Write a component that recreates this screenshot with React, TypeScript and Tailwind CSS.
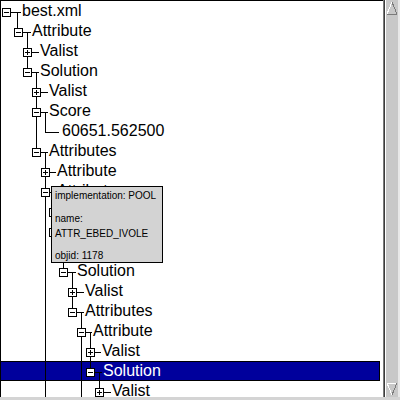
import React from "react";

type Row = {
  label: string;
  kind: "plus" | "minus" | "leaf";
  bx?: number;
  tx: number;
  lx?: number;
};

const rows: Row[] = [
  { label: "best.xml", bx: 1, tx: 22, kind: "minus" },
  { label: "Attribute", bx: 13, tx: 32, kind: "minus" },
  { label: "Valist", bx: 22, tx: 40, kind: "plus" },
  { label: "Solution", bx: 22, tx: 40, kind: "minus" },
  { label: "Valist", bx: 31, tx: 49, kind: "plus" },
  { label: "Score", bx: 31, tx: 49, kind: "minus" },
  { label: "60651.562500", tx: 62, kind: "leaf", lx: 44 },
  { label: "Attributes", bx: 31, tx: 49, kind: "minus" },
  { label: "Attribute", bx: 40, tx: 57, kind: "plus" },
  { label: "Attribute", bx: 40, tx: 57, kind: "minus" },
  { label: "Valist", bx: 48, tx: 66, kind: "plus" },
  { label: "Solution", bx: 48, tx: 66, kind: "minus" },
  { label: "Valist", bx: 58, tx: 76, kind: "plus" },
  { label: "Solution", bx: 58, tx: 77, kind: "minus" },
  { label: "Valist", bx: 67, tx: 85, kind: "plus" },
  { label: "Attributes", bx: 67, tx: 85, kind: "minus" },
  { label: "Attribute", bx: 76, tx: 93, kind: "minus" },
  { label: "Valist", bx: 85, tx: 102, kind: "plus" },
  { label: "Solution", bx: 85, tx: 103, kind: "minus" },
  { label: "Valist", bx: 94, tx: 112, kind: "plus" },
];

const SELECTED = 18;
const cy = (i: number) => 11 + 20 * i;

const verticals: [number, number, number][] = [
  [16, cy(0), cy(1) - 4],
  [26, cy(1), cy(3) - 4],
  [35, cy(3), cy(7) - 4],
  [44, cy(5), cy(6)],
  [44, cy(7), 400],
  [52, cy(9), cy(11) - 4],
  [62, cy(11), cy(13) - 4],
  [71, cy(13), cy(15) - 4],
  [80, cy(15), 400],
  [89, cy(16), cy(18) - 4],
  [98, cy(18), cy(19) - 4],
];

function TreeLines() {
  return (
    <svg
      className="absolute left-0 top-0 pointer-events-none"
      width={383}
      height={400}
      shapeRendering="crispEdges"
    >
      {verticals.map(([x, y1, y2], i) => (
        <line key={"v" + i} x1={x + 0.5} x2={x + 0.5} y1={y1} y2={y2} stroke="#000" />
      ))}
      {rows.map((r, i) => {
        const y = cy(i) + 0.5;
        if (r.kind === "leaf") {
          return (
            <line key={"h" + i} x1={r.lx!} x2={r.tx - 4} y1={y} y2={y} stroke="#000" />
          );
        }
        const bx = r.bx!;
        return (
          <g key={"b" + i}>
            <line x1={bx + 9} x2={r.tx - 2} y1={y} y2={y} stroke="#000" />
            <rect x={bx + 0.5} y={cy(i) - 4 + 0.5} width={8} height={8} fill="#fff" stroke="#000" />
            <line x1={bx + 2} x2={bx + 7} y1={y} y2={y} stroke="#000" />
            {r.kind === "plus" && (
              <line x1={bx + 4.5} x2={bx + 4.5} y1={cy(i) - 2} y2={cy(i) + 3} stroke="#000" />
            )}
          </g>
        );
      })}
    </svg>
  );
}

export default function App() {
  return (
    <div
      className="relative w-[400px] h-[400px] overflow-hidden bg-white flex"
      style={{ fontFamily: '"Liberation Sans", Arial, sans-serif' }}
    >
      <div className="relative w-[383px] h-[397px] border-l border-t border-black overflow-hidden">
        <div className="flex flex-col">
          {rows.map((r, i) =>
            i === SELECTED ? (
              <div
                key={i}
                className="h-[20px] w-[380px] -ml-px flex items-center border border-black bg-[#00009c] text-white text-[16px] leading-[20px] whitespace-nowrap"
                style={{ paddingLeft: r.tx - 1 }}
              >
                {r.label}
              </div>
            ) : (
              <div
                key={i}
                className="h-[20px] flex items-center text-black text-[16px] leading-[20px] whitespace-nowrap"
                style={{ paddingLeft: r.tx - 1 }}
              >
                {r.label}
              </div>
            )
          )}
        </div>
        <div className="absolute left-0 top-0">
          <TreeLines />
        </div>
      </div>
      <div className="flex flex-col w-[17px] h-[400px] bg-[#d4d4d4]">
        <div className="flex h-[397px]">
          <div className="w-px bg-[#7a7a7a]" />
          <div className="w-px bg-[#3c3c3c]" />
          <div className="flex-1 flex flex-col justify-between bg-[#c8c8c8] border-l border-white">
            <svg width={12} height={16} shapeRendering="crispEdges">
              <polygon points="6,2 1,14 11,14" fill="#c8c8c8" />
              <line x1={6} y1={2} x2={1} y2={14} stroke="#fff" />
              <line x1={1} y1={14} x2={11} y2={14} stroke="#7a7a7a" />
              <line x1={6} y1={2} x2={11} y2={14} stroke="#7a7a7a" />
            </svg>
            <svg width={12} height={16} shapeRendering="crispEdges">
              <polygon points="1,2 11,2 6,14" fill="#c8c8c8" />
              <line x1={1} y1={2} x2={11} y2={2} stroke="#fff" />
              <line x1={1} y1={2} x2={6} y2={14} stroke="#fff" />
              <line x1={11} y1={2} x2={6} y2={14} stroke="#7a7a7a" />
            </svg>
          </div>
          <div className="w-[2px] bg-[#e8e8e8]" />
        </div>
      </div>
      <div className="absolute left-0 bottom-0 w-[400px] h-[3px] bg-[#d4d4d4]" />
      <div
        className="absolute left-[51px] top-[186px] w-[112px] h-[77px] bg-[#d3d3d3] border border-black px-[3px] pt-[3px] text-[10px] leading-[12px] text-black whitespace-nowrap"
      >
        <div>implementation: POOL</div>
        <div className="mt-[11px]">name:</div>
        <div className="mt-[3px]">ATTR_EBED_IVOLE</div>
        <div className="mt-[10px]">objid: 1178</div>
      </div>
    </div>
  );
}
